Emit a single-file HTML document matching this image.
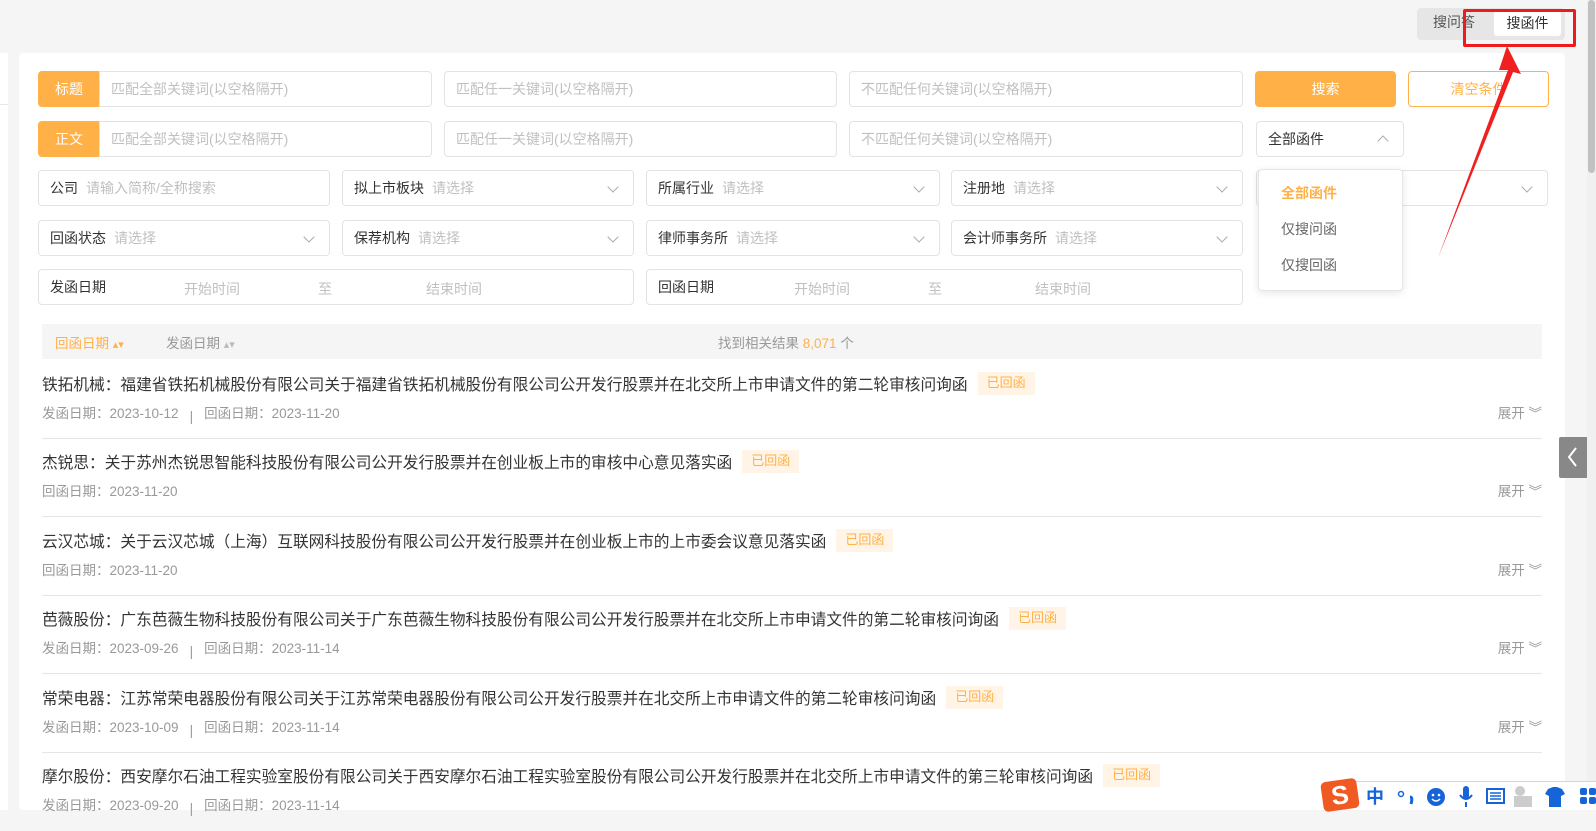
<!DOCTYPE html>
<html><head><meta charset="utf-8"><style>
*{margin:0;padding:0;box-sizing:border-box}
body{width:1596px;height:810px;overflow:hidden;background:#f5f5f5;font-family:"Liberation Sans","Noto Sans CJK SC",sans-serif;position:relative;color:#333}
.a{position:absolute}
.box{position:absolute;border:1px solid #e3e3e3;border-radius:4px;background:#fff;font-size:14px;display:flex;align-items:center;padding-left:11px;color:#333}
.ph{color:#c0c0c0}
.lbl{margin-right:8px}
.chev{position:absolute;right:16px;top:12px;width:8px;height:8px;border-right:1px solid #aaa;border-bottom:1px solid #aaa;transform:rotate(45deg)}
.item{position:absolute;left:42px;width:1500px;border-bottom:1px solid #e5e5e5;height:71px}
.t{position:absolute;left:0;top:4px;font-size:15.7px;color:#333;white-space:nowrap;display:flex;align-items:center}
.bd{display:inline-block;margin-left:10px;background:#fff4e6;color:#ffb148;font-size:13px;padding:0 9px;height:23px;line-height:21px}
.d{position:absolute;left:0;top:34px;font-size:13.5px;color:#999;white-space:nowrap}
.d i{font-style:normal;display:inline-block;margin:0 11px 0 11px;color:#999;position:relative;top:3px}
.ex{position:absolute;right:0;top:34px;font-size:13.5px;color:#999}
</style></head><body>
<div class="a" style="left:0;top:53px;width:8px;height:757px;background:#fff"></div>
<div class="a" style="left:0;top:104px;width:8px;height:1px;background:#e8e8e8"></div>
<div class="a" style="left:19px;top:53px;width:1546px;height:757px;background:#fff;border-radius:4px"></div>
<div class="a" style="left:1417px;top:8px;width:148px;height:32px;background:#e6e6e6;border-radius:4px"></div>
<div class="a" style="left:1433px;top:12px;font-size:14px;color:#555">搜问答</div>
<div class="a" style="left:1494px;top:11px;width:67px;height:25px;background:#fff;border-radius:3px;font-size:14px;color:#333;text-align:center;line-height:25px">搜函件</div>
<div class="a" style="left:1463px;top:9px;width:113px;height:38px;border:3px solid #f01a1a;border-radius:2px"></div>
<div class="a" style="left:38px;top:71px;width:62px;height:36px;background:#ffb148;border-radius:4px 0 0 4px;color:#fff;font-size:14px;text-align:center;line-height:36px">标题</div>
<div class="box" style="left:99px;top:71px;width:333px;height:36px;border-radius:0 4px 4px 0"><span class="ph">匹配全部关键词(以空格隔开)</span></div>
<div class="box" style="left:444px;top:71px;width:393px;height:36px"><span class="ph">匹配任一关键词(以空格隔开)</span></div>
<div class="box" style="left:849px;top:71px;width:394px;height:36px"><span class="ph">不匹配任何关键词(以空格隔开)</span></div>
<div class="a" style="left:1255px;top:71px;width:141px;height:36px;background:#ffb148;border-radius:4px;color:#fff;font-size:14px;text-align:center;line-height:36px">搜索</div>
<div class="a" style="left:1408px;top:71px;width:141px;height:36px;border:1px solid #ffb148;border-radius:4px;color:#ffb148;font-size:14px;text-align:center;line-height:34px">清空条件</div>
<div class="a" style="left:38px;top:121px;width:62px;height:36px;background:#ffb148;border-radius:4px 0 0 4px;color:#fff;font-size:14px;text-align:center;line-height:36px">正文</div>
<div class="box" style="left:99px;top:121px;width:333px;height:36px;border-radius:0 4px 4px 0"><span class="ph">匹配全部关键词(以空格隔开)</span></div>
<div class="box" style="left:444px;top:121px;width:393px;height:36px"><span class="ph">匹配任一关键词(以空格隔开)</span></div>
<div class="box" style="left:849px;top:121px;width:394px;height:36px"><span class="ph">不匹配任何关键词(以空格隔开)</span></div>
<div class="box" style="left:1256px;top:121px;width:148px;height:36px">全部函件<span class="a" style="right:16px;top:15px;width:8px;height:8px;border-left:1px solid #aaa;border-top:1px solid #aaa;transform:rotate(45deg)"></span></div>
<div class="box" style="left:38px;top:170px;width:292px;height:36px"><span class="lbl">公司</span><span class="ph">请输入简称/全称搜索</span></div>
<div class="box" style="left:342px;top:170px;width:292px;height:36px"><span class="lbl">拟上市板块</span><span class="ph">请选择</span><span class="chev"></span></div>
<div class="box" style="left:646px;top:170px;width:294px;height:36px"><span class="lbl">所属行业</span><span class="ph">请选择</span><span class="chev"></span></div>
<div class="box" style="left:951px;top:170px;width:292px;height:36px"><span class="lbl">注册地</span><span class="ph">请选择</span><span class="chev"></span></div>
<div class="box" style="left:1256px;top:170px;width:292px;height:36px"><span class="chev"></span></div>
<div class="box" style="left:38px;top:220px;width:292px;height:36px"><span class="lbl">回函状态</span><span class="ph">请选择</span><span class="chev"></span></div>
<div class="box" style="left:342px;top:220px;width:292px;height:36px"><span class="lbl">保荐机构</span><span class="ph">请选择</span><span class="chev"></span></div>
<div class="box" style="left:646px;top:220px;width:294px;height:36px"><span class="lbl">律师事务所</span><span class="ph">请选择</span><span class="chev"></span></div>
<div class="box" style="left:951px;top:220px;width:292px;height:36px"><span class="lbl">会计师事务所</span><span class="ph">请选择</span><span class="chev"></span></div>
<div class="box" style="left:38px;top:269px;width:596px;height:36px"><span>发函日期</span><span class="ph a" style="left:145px;top:9px">开始时间</span><span class="ph a" style="left:279px;top:9px">至</span><span class="ph a" style="left:387px;top:9px">结束时间</span></div>
<div class="box" style="left:646px;top:269px;width:597px;height:36px"><span>回函日期</span><span class="ph a" style="left:147px;top:9px">开始时间</span><span class="ph a" style="left:281px;top:9px">至</span><span class="ph a" style="left:388px;top:9px">结束时间</span></div>
<div class="a" style="left:1258px;top:169px;width:145px;height:122px;background:#fff;border:1px solid #e6e6e6;border-radius:4px;box-shadow:0 2px 8px rgba(0,0,0,.1);font-size:14px;color:#666">
<div class="a" style="left:22px;top:13px;color:#ffb148;font-weight:bold">全部函件</div>
<div class="a" style="left:22px;top:49px">仅搜问函</div>
<div class="a" style="left:22px;top:85px">仅搜回函</div>
</div>
<div class="a" style="left:42px;top:324px;width:1500px;height:35px;background:#f5f5f5;font-size:13.5px;color:#999">
<span class="a" style="left:13px;top:8px;color:#ffb148">回函日期 <span style="font-size:11px">▴▾</span></span>
<span class="a" style="left:124px;top:8px">发函日期 <span style="font-size:11px;color:#bbb">▴▾</span></span>
<span class="a" style="left:676px;top:8px">找到相关结果 <span style="color:#ffb148">8,071</span> 个</span>
</div>
<div class="item" style="top:368px"><div class="t">铁拓机械：福建省铁拓机械股份有限公司关于福建省铁拓机械股份有限公司公开发行股票并在北交所上市申请文件的第二轮审核问询函<span class="bd">已回函</span></div><div class="d">发函日期：2023-10-12<i>|</i>回函日期：2023-11-20</div><div class="ex">展开 ︾</div></div>
<div class="item" style="top:446px"><div class="t">杰锐思：关于苏州杰锐思智能科技股份有限公司公开发行股票并在创业板上市的审核中心意见落实函<span class="bd">已回函</span></div><div class="d">回函日期：2023-11-20</div><div class="ex">展开 ︾</div></div>
<div class="item" style="top:525px"><div class="t">云汉芯城：关于云汉芯城（上海）互联网科技股份有限公司公开发行股票并在创业板上市的上市委会议意见落实函<span class="bd">已回函</span></div><div class="d">回函日期：2023-11-20</div><div class="ex">展开 ︾</div></div>
<div class="item" style="top:603px"><div class="t">芭薇股份：广东芭薇生物科技股份有限公司关于广东芭薇生物科技股份有限公司公开发行股票并在北交所上市申请文件的第二轮审核问询函<span class="bd">已回函</span></div><div class="d">发函日期：2023-09-26<i>|</i>回函日期：2023-11-14</div><div class="ex">展开 ︾</div></div>
<div class="item" style="top:682px"><div class="t">常荣电器：江苏常荣电器股份有限公司关于江苏常荣电器股份有限公司公开发行股票并在北交所上市申请文件的第二轮审核问询函<span class="bd">已回函</span></div><div class="d">发函日期：2023-10-09<i>|</i>回函日期：2023-11-14</div><div class="ex">展开 ︾</div></div>
<div class="item" style="top:760px;border:none"><div class="t">摩尔股份：西安摩尔石油工程实验室股份有限公司关于西安摩尔石油工程实验室股份有限公司公开发行股票并在北交所上市申请文件的第三轮审核问询函<span class="bd">已回函</span></div><div class="d">发函日期：2023-09-20<i>|</i>回函日期：2023-11-14</div></div>
<div class="a" style="left:1587px;top:0;width:9px;height:810px;background:#f0f0f0"></div>
<div class="a" style="left:1588px;top:0;width:7px;height:173px;background:#c1c1c1;border-radius:4px"></div>
<div class="a" style="left:1559px;top:437px;width:28px;height:41px;background:#888;border-radius:2px 0 0 2px"><svg width="28" height="41"><path d="M17 11 L10 20 L17 29" stroke="#fff" stroke-width="2" fill="none"/></svg></div>
<svg class="a" style="left:0;top:0" width="1596" height="810"><polygon points="1507,46 1521,74 1513,72 1438,258 1508,70 1499,70" fill="#f02020"/></svg>
<div class="a" style="left:1354px;top:781px;width:242px;height:29px;background:#fff;border-top:1px solid #cfd6e0"></div>
<div class="a" style="left:1322px;top:780px;width:36px;height:30px;background:#f05a22;border-radius:5px;transform:rotate(-8deg);color:#fff;font-weight:bold;font-size:26px;text-align:center;line-height:30px">S</div>
<svg class="a" style="left:1360px;top:782px" width="236" height="28">
<text x="6" y="21" font-size="18" font-weight="bold" fill="#1565d8" font-family="Noto Sans CJK SC">中</text>
<circle cx="41" cy="12" r="2.5" fill="none" stroke="#1565d8" stroke-width="1.5"/>
<path d="M50 15 q3 0 1 7" stroke="#1565d8" stroke-width="3" fill="none"/>
<circle cx="76" cy="15" r="9" fill="#1565d8"/><circle cx="73" cy="13" r="1.3" fill="#fff"/><circle cx="79" cy="13" r="1.3" fill="#fff"/><path d="M72 17 q4 4 8 0" stroke="#fff" stroke-width="1.5" fill="none"/>
<rect x="103" y="4" width="6" height="13" rx="3" fill="#1565d8"/><path d="M100 13 q6 8 12 0 M106 20 v5" stroke="#1565d8" stroke-width="2" fill="none"/>
<rect x="127" y="7" width="17" height="14" fill="none" stroke="#1565d8" stroke-width="2"/><path d="M130 11 h11 M130 14 h11 M130 17 h11" stroke="#1565d8" stroke-width="1.5"/>
<circle cx="160" cy="9" r="5" fill="#ccc"/><rect x="154" y="14" width="18" height="11" fill="#ccc"/>
<path d="M188 7 l5 -2 h4 l5 2 l3 5 l-4 2 v11 h-12 v-11 l-4 -2z" fill="#1565d8"/>
<rect x="220" y="6" width="7" height="7" rx="2" fill="#1565d8"/><rect x="229" y="6" width="7" height="7" rx="2" fill="#1565d8"/><rect x="220" y="15" width="7" height="7" rx="2" fill="#1565d8"/><rect x="229" y="15" width="7" height="7" rx="2" fill="#1565d8"/>
</svg>
</body></html>
